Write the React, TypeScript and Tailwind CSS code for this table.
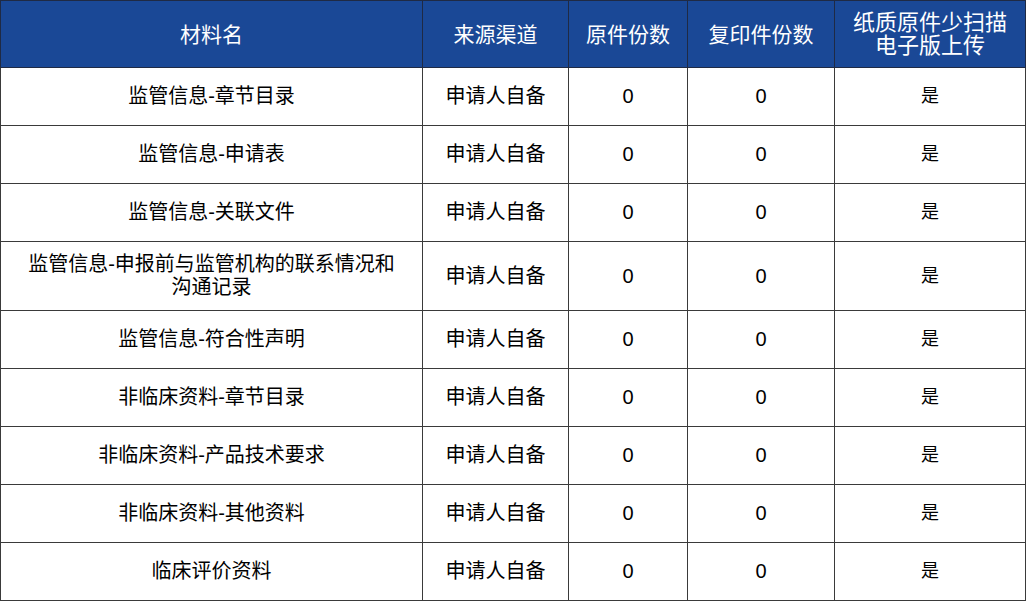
const rows = [
  ['监管信息-章节目录'],
  ['监管信息-申请表'],
  ['监管信息-关联文件'],
  ['监管信息-申报前与监管机构的联系情况和', '沟通记录'],
  ['监管信息-符合性声明'],
  ['非临床资料-章节目录'],
  ['非临床资料-产品技术要求'],
  ['非临床资料-其他资料'],
  ['临床评价资料'],
]

export default function App() {
  return (
    <div className="w-[1026px] h-[601px] bg-white" style={{ fontFamily: '"Liberation Sans", Arial, "Noto Sans CJK SC", sans-serif' }}>
      <table className="table-fixed border-collapse w-[1025px] border border-[#2a2a2a]">
        <colgroup>
          <col className="w-[422px]" />
          <col className="w-[146px]" />
          <col className="w-[119px]" />
          <col className="w-[147px]" />
          <col className="w-[191px]" />
        </colgroup>
        <thead>
          <tr className="h-[67px] bg-[#1a4896] text-white text-[21px] leading-[23px]">
            <th className="font-normal border border-[#1f2a44]">材料名</th>
            <th className="font-normal border border-[#1f2a44]">来源渠道</th>
            <th className="font-normal border border-[#1f2a44]">原件份数</th>
            <th className="font-normal border border-[#1f2a44]">复印件份数</th>
            <th className="font-normal border border-[#1f2a44] whitespace-nowrap text-[22px]">
              纸质原件少扫描
              <br />
              电子版上传
            </th>
          </tr>
        </thead>
        <tbody className="text-black text-[20px] leading-[23px]">
          {rows.map((lines, i) => (
            <tr key={i} className={i === 3 ? 'h-[69px]' : 'h-[58px]'}>
              <td className="border border-[#3a3a3a] text-center whitespace-nowrap">
                {lines.map((l, j) => (
                  <div key={j}>{l}</div>
                ))}
              </td>
              <td className="border border-[#3a3a3a] text-center">申请人自备</td>
              <td className="border border-[#3a3a3a] text-center">0</td>
              <td className="border border-[#3a3a3a] text-center">0</td>
              <td className="border border-[#3a3a3a] text-center text-[18px]">是</td>
            </tr>
          ))}
        </tbody>
      </table>
    </div>
  )
}
